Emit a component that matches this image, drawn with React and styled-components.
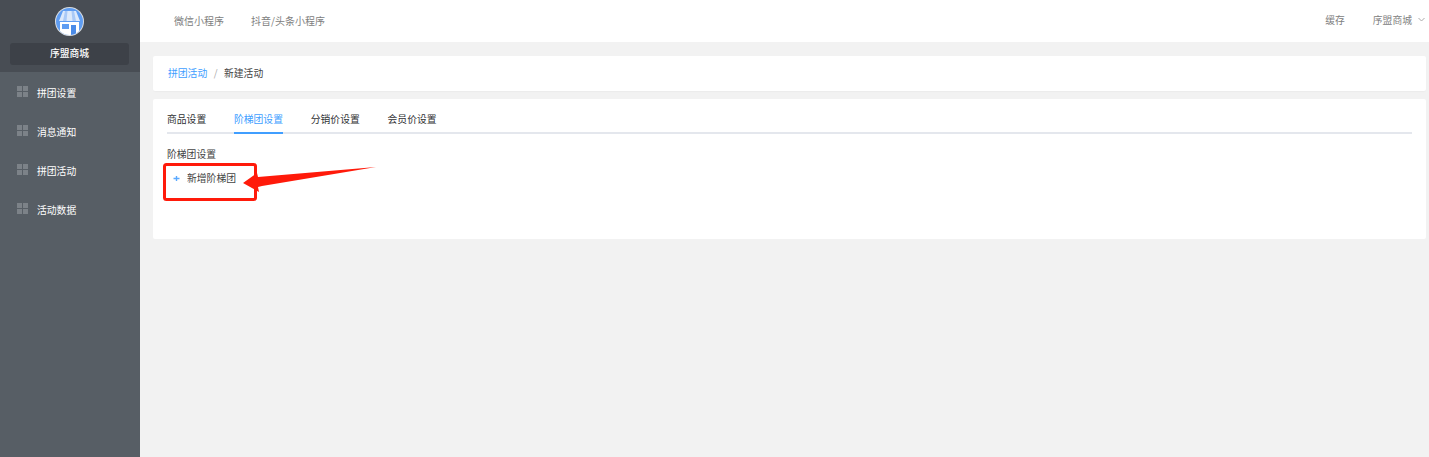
import styled, { createGlobalStyle } from "styled-components";

const GlobalStyle = createGlobalStyle`
  html, body {
    margin: 0;
    padding: 0;
    background: #f2f2f2;
  }
  body {
    font-family: "Noto Sans CJK SC", "Liberation Sans", sans-serif;
  }
`;

const Page = styled.div`
  width: 1429px;
  height: 457px;
  display: flex;
  overflow: hidden;
  position: relative;
`;

const Sidebar = styled.aside`
  width: 140px;
  flex-shrink: 0;
  background: #575e65;
  display: flex;
  flex-direction: column;
`;

const Brand = styled.div`
  height: 72px;
  box-sizing: border-box;
  padding-top: 7px;
  background: #484d54;
  display: flex;
  flex-direction: column;
  align-items: center;
`;

const Avatar = styled.svg`
  width: 29px;
  height: 29px;
  display: block;
  margin-left: -1px;
`;

const ShopName = styled.div`
  width: 119px;
  height: 22px;
  margin: 7px 0 0 -1px;
  border-radius: 3px;
  background: #3d4148;
  color: #fff;
  font-size: 9.8px;
  font-weight: 500;
  line-height: 20px;
  text-align: center;
`;

const Nav = styled.ul`
  list-style: none;
  margin: 0;
  padding: 1px 0 0;
`;

const NavItem = styled.li`
  height: 39px;
  display: flex;
  align-items: center;
  padding-left: 17px;
  color: #fff;
  font-size: 9.8px;
  line-height: 14px;
`;

const NavIcon = styled.span`
  width: 11px;
  height: 11px;
  display: grid;
  grid-template-columns: 5px 5px;
  grid-template-rows: 5px 5px;
  gap: 1px;
  margin: -3px 9px 0 0;

  i {
    background: #7c8288;
  }
`;

const Main = styled.div`
  flex: 1;
  display: flex;
  flex-direction: column;
`;

const TopBar = styled.header`
  height: 42px;
  box-sizing: border-box;
  padding: 0 4px 2px 34px;
  background: #fff;
  display: flex;
  align-items: center;
  justify-content: space-between;
  color: #808080;
  font-size: 9.8px;
`;

const TopGroup = styled.div`
  display: flex;
  align-items: center;
  gap: ${(p) => p.$gap}px;
  font-size: ${(p) => p.$size}px;
`;

const Chevron = styled.svg`
  width: 7px;
  height: 5px;
  margin-left: 6px;
  margin-bottom: 2px;
`;

const Content = styled.main`
  padding: 14px 3px 0 13px;
  display: flex;
  flex-direction: column;
  gap: 8px;
`;

const Breadcrumb = styled.nav`
  height: 35px;
  box-sizing: border-box;
  padding: 0 0 2px 15px;
  background: #fff;
  border-radius: 2px;
  display: flex;
  align-items: center;
  font-size: 9.8px;
  color: #555;
  box-shadow: 0 1px 1px #ececec;
`;

const Crumb = styled.span`
  color: ${(p) => (p.$link ? "#409eff" : "#444")};
`;

const Slash = styled.span`
  margin: 0 6.500px;
  color: #aaa;
`;

const Card = styled.section`
  height: 140px;
  box-sizing: border-box;
  background: #fff;
  border-radius: 2px;
  padding: 0 14px;
`;

const Tabs = styled.div`
  height: 35px;
  box-sizing: border-box;
  border-bottom: 2px solid #e4e7ed;
  display: flex;
  gap: 27.8px;
`;

const Tab = styled.div`
  height: 35px;
  box-sizing: border-box;
  padding-top: 13px;
  font-size: 9.8px;
  line-height: 15px;
  color: ${(p) => (p.$active ? "#409eff" : "#303133")};
  border-bottom: 2px solid ${(p) => (p.$active ? "#409eff" : "transparent")};
`;

const SectionLabel = styled.div`
  margin-top: 13px;
  font-size: 9.8px;
  line-height: 14px;
  color: #444;
`;

const AddRow = styled.div`
  margin-top: 9px;
  display: flex;
  align-items: center;
  padding-left: 6px;
  height: 16px;
  font-size: 9.8px;
  color: #444;
`;

const PlusIcon = styled.svg`
  width: 7px;
  height: 7px;
  margin-right: 7px;
`;

const Annotation = styled.svg`
  position: absolute;
  left: 160px;
  top: 160px;
  width: 220px;
  height: 44px;
  pointer-events: none;
`;

const menu = ["拼团设置", "消息通知", "拼团活动", "活动数据"];
const tabs = ["商品设置", "阶梯团设置", "分销价设置", "会员价设置"];

const ShopLogo = () => (
  <Avatar viewBox="0 0 29 29">
    <defs>
      <clipPath id="shop-clip">
        <circle cx="14.5" cy="14.5" r="13.5" />
      </clipPath>
    </defs>
    <circle cx="14.5" cy="14.5" r="14.5" fill="#d9dde2" />
    <g clipPath="url(#shop-clip)">
      <rect width="29" height="29" fill="#5f9df2" />
      <rect x="5" y="15" width="19" height="14" fill="#fff" />
      <path d="M8 4h13l4 10H4z" fill="#dce9fb" />
      <path d="M10 4h2.500l-1 10H8zM16.500 4H19l2 10h-3.500z" fill="#a9c9f7" />
      <rect x="7" y="17" width="7" height="5" fill="#5f9df2" />
      <rect x="16" y="18" width="5" height="11" fill="#4a8be8" />
    </g>
  </Avatar>
);

const App = () => (
  <Page>
    <GlobalStyle />
    <Sidebar>
      <Brand>
        <ShopLogo />
        <ShopName>序盟商城</ShopName>
      </Brand>
      <Nav>
        {menu.map((item) => (
          <NavItem key={item}>
            <NavIcon>
              <i />
              <i />
              <i />
              <i />
            </NavIcon>
            {item}
          </NavItem>
        ))}
      </Nav>
    </Sidebar>
    <Main>
      <TopBar>
        <TopGroup $gap={27} $size={10}>
          <span>微信小程序</span>
          <span>抖音/头条小程序</span>
        </TopGroup>
        <TopGroup $gap={28} $size={9.8}>
          <span>缓存</span>
          <span>
            序盟商城
            <Chevron viewBox="0 0 7 5">
              <path d="M.5 1l3 3 3-3" fill="none" stroke="#aaa" strokeWidth="1" />
            </Chevron>
          </span>
        </TopGroup>
      </TopBar>
      <Content>
        <Breadcrumb>
          <Crumb $link>拼团活动</Crumb>
          <Slash>/</Slash>
          <Crumb>新建活动</Crumb>
        </Breadcrumb>
        <Card>
          <Tabs>
            {tabs.map((tab) => (
              <Tab key={tab} $active={tab === "阶梯团设置"}>
                {tab}
              </Tab>
            ))}
          </Tabs>
          <SectionLabel>阶梯团设置</SectionLabel>
          <AddRow>
            <PlusIcon viewBox="0 0 7 7">
              <path d="M3.500 1v5M.5 3.500h6" stroke="#5aa9ff" strokeWidth="1.400" />
            </PlusIcon>
            新增阶梯团
          </AddRow>
        </Card>
      </Content>
    </Main>
    <Annotation viewBox="160 160 220 44">
      <rect x="164.500" y="164.500" width="91" height="35" rx="2" fill="none" stroke="#ff1a0a" strokeWidth="3" />
      <path d="M243 183 L257 173 L258 177 L376 167 L262 186 L258 187 L259 192 Z" fill="#ff1a0a" />
    </Annotation>
  </Page>
);

export default App;
